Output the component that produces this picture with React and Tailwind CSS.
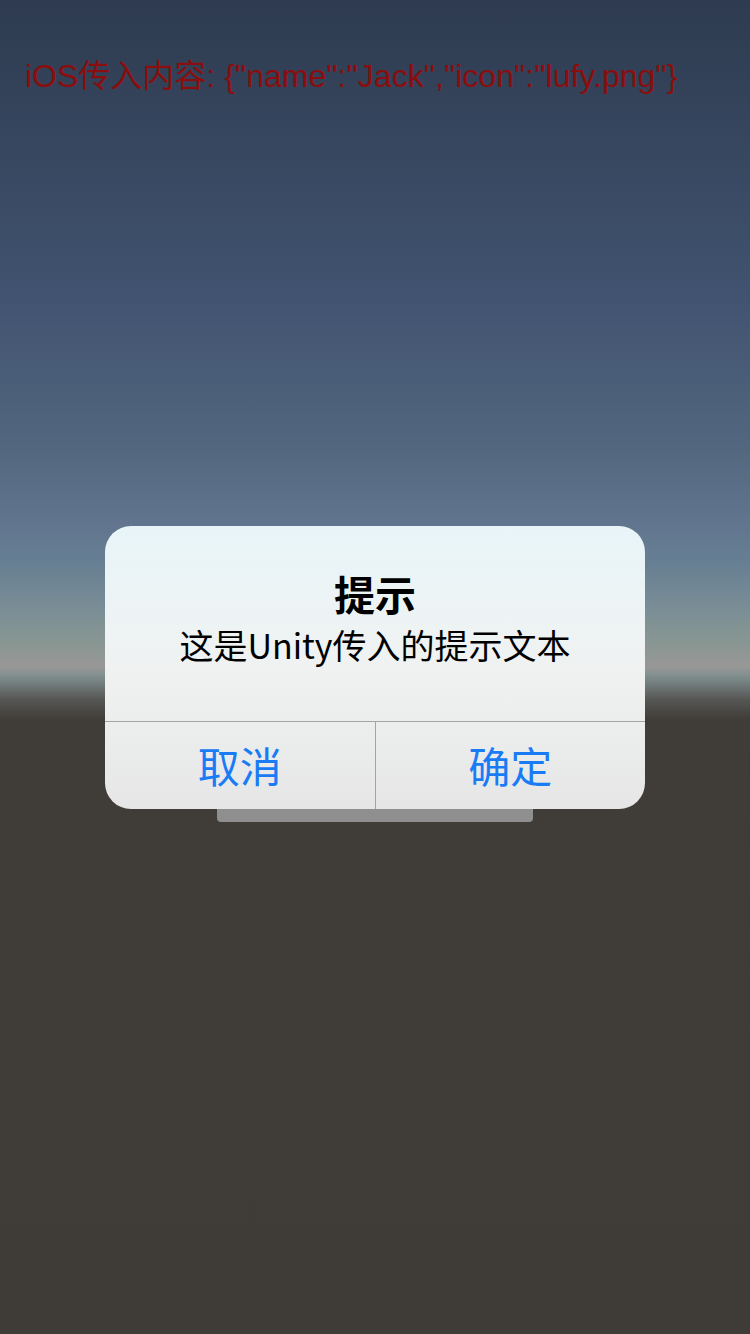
export default function App() {
    return (
        <div
            className="relative w-full h-[1334px] overflow-hidden"
            style={{
                background:
                    'linear-gradient(to bottom, #2e3b50 0px, #34435a 100px, #415370 300px, #53677f 450px, #62778f 530px, #667e93 560px, #7b8e96 610px, #879692 640px, #989796 667px, #7f8f8e 676px, #555654 700px, #403c38 720px, #3f3b37 1334px)',
            }}
        >
            <p className="pt-[60px] pl-[25px] text-[32px] leading-none text-[#8a0e0e] font-['Liberation_Sans','Noto_Sans_CJK_SC',sans-serif] whitespace-nowrap">
                iOS传入内容: {'{"name":"Jack","icon":"lufy.png"}'}
            </p>

            <div className="mt-[650px] mx-auto w-[316px] h-[80px] bg-[#8f8f8f] rounded-[4px]" />

            <div className="absolute inset-0 flex items-center justify-center">
                <div className="w-[540px] h-[283px] rounded-[26px] overflow-hidden flex flex-col bg-gradient-to-b from-[#e8f5f8] via-[#f0f2f2] to-[#e6e6e6] font-['Noto_Sans_CJK_SC',sans-serif]">
                    <div className="h-[195px] flex flex-col items-center pt-[47px]">
                        <h2 className="text-[41px] leading-none font-bold text-black">提示</h2>
                        <p className="mt-[14px] text-[34px] leading-none text-black">这是Unity传入的提示文本</p>
                    </div>
                    <div className="flex flex-1 border-t border-[#a3a3a3]">
                        <button className="flex-1 flex items-center justify-center text-[42px] leading-none text-[#1a7cf5]">
                            取消
                        </button>
                        <div className="w-px bg-[#a3a3a3]" />
                        <button className="flex-1 flex items-center justify-center text-[42px] leading-none text-[#1a7cf5]">
                            确定
                        </button>
                    </div>
                </div>
            </div>
        </div>
    );
}
